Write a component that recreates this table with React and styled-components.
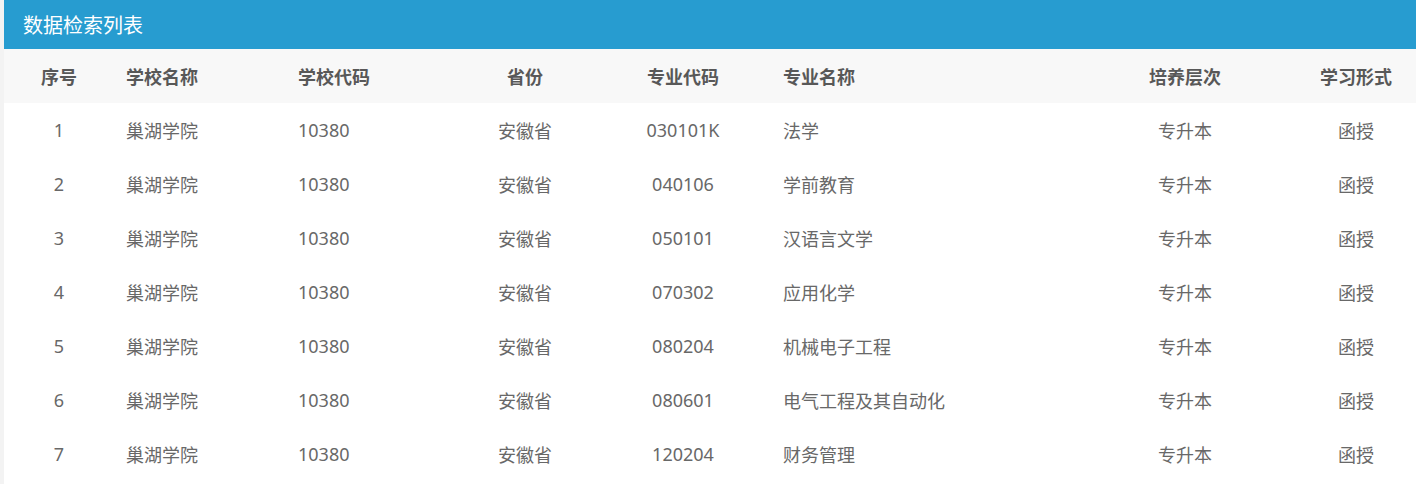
import React from 'react';
import styled, { createGlobalStyle } from 'styled-components';

const GlobalStyle = createGlobalStyle`
  html, body {
    margin: 0;
    padding: 0;
    background: #ffffff;
    font-family: 'Noto Sans', 'Noto Sans CJK SC', sans-serif;
  }
`;

const Page = styled.div`
  display: flex;
  min-height: 484px;
  background: #f3f3f3;
  padding-left: 4px;
`;

const Panel = styled.section`
  flex: 1;
  background: #ffffff;
`;

const PanelHeader = styled.h2`
  margin: 0;
  height: 49px;
  display: flex;
  align-items: center;
  padding-left: 19px;
  background: #279cd0;
  color: #ffffff;
  font-size: 20px;
  font-weight: normal;
`;

const Table = styled.table`
  width: 100%;
  border-collapse: collapse;
  table-layout: fixed;
`;

const HeadRow = styled.tr`
  background: #f8f8f8;
`;

const Th = styled.th`
  height: 54px;
  padding: 0 0 0 ${(p) => p.$pad || 0}px;
  text-align: ${(p) => p.$align || 'center'};
  font-size: 18px;
  font-weight: bold;
  color: #585858;
`;

const Td = styled.td`
  height: 54px;
  padding: 0 0 0 ${(p) => p.$pad || 0}px;
  text-align: ${(p) => p.$align || 'center'};
  font-size: 18px;
  color: #686868;
`;

const columns = [
  { key: 'no', title: '序号', width: 110 },
  { key: 'school', title: '学校名称', width: 172, align: 'left', pad: 12 },
  { key: 'code', title: '学校代码', width: 154, align: 'left', pad: 12 },
  { key: 'prov', title: '省份', width: 170 },
  { key: 'major', title: '专业代码', width: 146 },
  { key: 'name', title: '专业名称', width: 318, align: 'left', pad: 27 },
  { key: 'level', title: '培养层次', width: 222 },
  { key: 'form', title: '学习形式', width: 120 },
];

const majors = [
  ['030101K', '法学'],
  ['040106', '学前教育'],
  ['050101', '汉语言文学'],
  ['070302', '应用化学'],
  ['080204', '机械电子工程'],
  ['080601', '电气工程及其自动化'],
  ['120204', '财务管理'],
];

const rows = majors.map(([major, name], i) => ({
  no: i + 1,
  school: '巢湖学院',
  code: '10380',
  prov: '安徽省',
  major,
  name,
  level: '专升本',
  form: '函授',
}));

const App = () => {
  return (
    <>
      <GlobalStyle />
      <Page>
        <Panel>
          <PanelHeader>数据检索列表</PanelHeader>
          <Table>
            <colgroup>
              {columns.map((c) => (
                <col key={c.key} style={{ width: c.width }} />
              ))}
            </colgroup>
            <thead>
              <HeadRow>
                {columns.map((c) => (
                  <Th key={c.key} $align={c.align} $pad={c.pad}>
                    {c.title}
                  </Th>
                ))}
              </HeadRow>
            </thead>
            <tbody>
              {rows.map((r) => (
                <tr key={r.no}>
                  {columns.map((c) => (
                    <Td key={c.key} $align={c.align} $pad={c.pad}>
                      {r[c.key]}
                    </Td>
                  ))}
                </tr>
              ))}
            </tbody>
          </Table>
        </Panel>
      </Page>
    </>
  );
};

export default App;
